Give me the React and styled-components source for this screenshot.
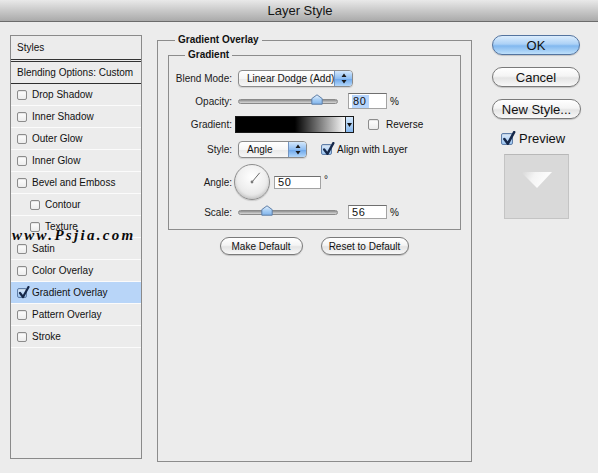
import React from "react";
import styled, { createGlobalStyle, css } from "styled-components";

const FONT = `"Liberation Sans", Arial, sans-serif`;

const GlobalStyle = createGlobalStyle`
  html, body { margin: 0; padding: 0; background: #ececec; }
  body { font-family: ${FONT}; color: #111; }
  * { box-sizing: border-box; }
`;

const Window = styled.div`
  position: relative;
  width: 598px;
  height: 473px;
  overflow: hidden;
  background: #ececec;
  display: flex;
  flex-direction: column;
`;

const TitleBar = styled.div`
  height: 22px;
  flex: none;
  border-bottom: 1px solid #6c6c6c;
  background: linear-gradient(#e9e9e9, #c9c9c9 50%, #aaaaaa);
  display: flex;
  align-items: center;
  justify-content: center;
  font-size: 13px;
  color: #141414;
  padding-left: 2px;
`;

const Main = styled.div`
  display: flex;
  align-items: flex-start;
  padding: 13px 0 0 10px;
`;

/* ---------- Left styles list ---------- */
const StylesPanel = styled.div`
  width: 132px;
  height: 424px;
  flex: none;
  border: 1px solid #8a8a8a;
  display: flex;
  flex-direction: column;
`;

const PanelHeader = styled.div`
  height: 26px;
  padding: 0 0 0 6px;
  display: flex;
  align-items: center;
  font-size: 10px;
  border-bottom: 3px double #333;
`;

const BlendRow = styled.div`
  height: 22px;
  padding-left: 6px;
  display: flex;
  align-items: center;
  font-size: 10px;
  border-bottom: 1px solid #2e2e2e;
`;

const ListRow = styled.div`
  height: 22px;
  display: flex;
  align-items: center;
  gap: 5px;
  padding-left: ${(p) => (p.$indent ? 19 : 6)}px;
  font-size: 10px;
  border-bottom: 1px solid #fbfbfb;
  background: ${(p) => (p.$selected ? "#b8d5f8" : "transparent")};
`;

const Watermark = styled.div`
  position: absolute;
  left: 12px;
  top: 227px;
  font-family: "Liberation Serif", "Times New Roman", serif;
  font-style: italic;
  font-weight: bold;
  font-size: 15px;
  letter-spacing: 2.3px;
  color: #0a0a0a;
  pointer-events: none;
`;

/* ---------- Checkbox ---------- */
const Box = styled.span`
  position: relative;
  flex: none;
  display: inline-block;
  width: ${(p) => p.$size}px;
  height: ${(p) => p.$size}px;
  border: 1px solid #8c8c8c;
  border-radius: 2px;
  background: linear-gradient(#ffffff, #ececec);
  box-shadow: inset 0 1px 1px rgba(0, 0, 0, 0.1);
  ${(p) =>
    p.$checked &&
    css`
      border-color: #5f7ea8;
      background: linear-gradient(#dcebfc, #9cc5f1);
    `}
`;

const CheckGlyph = styled.svg`
  position: absolute;
  left: 0px;
  top: -3px;
`;

function Checkbox({ size = 10, checked }) {
  return (
    <Box $size={size} $checked={checked}>
      {checked && (
        <CheckGlyph width={size + 2} height={size + 3} viewBox="0 0 12 13">
          <path d="M2 7 L5 11 L10.5 1" fill="none" stroke="#16284a" strokeWidth="2.2" strokeLinecap="round" strokeLinejoin="round" />
        </CheckGlyph>
      )}
    </Box>
  );
}

/* ---------- Center ---------- */
const GroupBox = styled.fieldset`
  margin: 0;
  padding: 0;
  min-width: 0;
  border: 1px solid #8c8c8c;
`;

const OuterGroup = styled(GroupBox)`
  flex: none;
  width: 315px;
  height: 428px;
  margin-left: 15px;
  margin-top: -1px;
`;

const InnerGroup = styled(GroupBox)`
  margin: 3px 10px 0 10px;
  padding: 6px 0 7px 0;
`;

const Legend = styled.legend`
  font-size: 10px;
  font-weight: bold;
  line-height: 12px;
  padding: 0 3px;
  margin-left: ${(p) => p.$offset}px;
`;

const Row = styled.div`
  height: ${(p) => p.$h}px;
  display: flex;
  align-items: center;
  font-size: 10px;
`;

const Label = styled.span`
  flex: none;
  width: 63px;
  margin-right: 6px;
  text-align: right;
  font-size: 10px;
  color: #1a1a1a;
`;

const Popup = styled.div`
  flex: none;
  width: ${(p) => p.$w}px;
  height: 17px;
  border: 1px solid #8b8b8b;
  border-radius: 4px;
  overflow: hidden;
  display: flex;
  align-items: center;
  padding-left: 8px;
  font-size: 10px;
  white-space: nowrap;
  background: linear-gradient(#ffffff, #f6f6f6 50%, #e9e9e9 51%, #f7f7f7);
  box-shadow: 0 1px 1px rgba(0, 0, 0, 0.12);
`;

const Stepper = styled.span`
  margin-left: auto;
  flex: none;
  width: 18px;
  align-self: stretch;
  border-left: 1px solid #7394c0;
  background: linear-gradient(#d4e8fc, #8fbef2 50%, #6aa5ea 51%, #b3d7fa);
  display: flex;
  align-items: center;
  justify-content: center;
`;

function StepperArrows() {
  return (
    <Stepper>
      <svg width="6" height="11" viewBox="0 0 6 11">
        <path d="M3 0.5 L5.5 4 L0.5 4 Z M3 10.5 L5.5 7 L0.5 7 Z" fill="#1b1b1b" />
      </svg>
    </Stepper>
  );
}

const Track = styled.div`
  position: relative;
  flex: none;
  width: 100px;
  height: 5px;
  border-radius: 3px;
  border: 1px solid #8a8a8a;
  background: linear-gradient(#8e8e8e, #bdbdbd 60%, #d6d6d6);
`;

const Thumb = styled.svg`
  position: absolute;
  top: -6px;
  margin-left: -6px;
`;

function Slider({ fraction }) {
  return (
    <Track>
      <Thumb width="12" height="11" viewBox="0 0 12 11" style={{ left: `${fraction * 100}%` }}>
        <defs>
          <linearGradient id="thumbg" x1="0" y1="0" x2="0" y2="1">
            <stop offset="0" stopColor="#eaf3fd" />
            <stop offset="0.5" stopColor="#a9cff5" />
            <stop offset="1" stopColor="#7fb3ec" />
          </linearGradient>
        </defs>
        <path d="M6 0.8 L11.2 4.6 L11.2 10.2 L0.8 10.2 L0.8 4.6 Z" fill="url(#thumbg)" stroke="#5d7da6" strokeWidth="1" />
      </Thumb>
    </Track>
  );
}

const NumField = styled.div`
  flex: none;
  width: ${(p) => p.$w}px;
  height: ${(p) => p.$h}px;
  margin-left: ${(p) => p.$ml}px;
  background: #fff;
  border: 1px solid #a3a3a3;
  border-top-color: #6f6f6f;
  display: flex;
  align-items: center;
  padding-left: 3px;
  font-size: 11px;
  letter-spacing: 0.6px;
`;

const Selected = styled.span`
  background: #b6d5fd;
  padding: 0 3px 0 1px;
  line-height: 13px;
`;

const Unit = styled.span`
  margin-left: 3px;
  font-size: 10px;
  align-self: ${(p) => (p.$raised ? "flex-start" : "center")};
  margin-top: ${(p) => (p.$raised ? 12 : 0)}px;
`;

const GradientSwatch = styled.div`
  display: flex;
  flex: none;
  height: 17px;
  margin-left: -3px;
  border: 1px solid #1a1a1a;
`;

const GradientFill = styled.div`
  width: 109px;
  background: linear-gradient(to right, #000 0%, #000 54%, #fafafa 100%);
`;

const GradientArrow = styled.div`
  width: 8px;
  border-left: 1px solid #2a2a2a;
  background: linear-gradient(#d8eafc, #86b8ee);
  display: flex;
  align-items: center;
  justify-content: center;
`;

const CheckLabel = styled.label`
  display: flex;
  align-items: center;
  gap: ${(p) => p.$gap}px;
  margin-left: ${(p) => p.$ml}px;
  font-size: 10px;
  white-space: nowrap;
`;

const Dial = styled.div`
  position: relative;
  flex: none;
  width: 36px;
  height: 36px;
  margin-left: -4px;
  border-radius: 50%;
  border: 1px solid #8e8e8e;
  background: radial-gradient(circle at 50% 35%, #ffffff 0%, #f0f0f0 45%, #d9d9d9 100%);
  box-shadow: inset 0 -2px 3px rgba(0, 0, 0, 0.12), 0 1px 1px rgba(0, 0, 0, 0.15);
`;

const DialHand = styled.svg`
  position: absolute;
  left: 0;
  top: 0;
`;

const ButtonBar = styled.div`
  display: flex;
  justify-content: center;
  gap: 18px;
  margin-top: 7px;
  padding-right: 1px;
`;

const PillButton = styled.button`
  flex: none;
  width: ${(p) => p.$w}px;
  height: ${(p) => p.$h}px;
  padding: 0;
  border-radius: 999px;
  border: 1px solid #7a7a7a;
  font-family: ${FONT};
  font-size: ${(p) => p.$fs}px;
  color: #111;
  white-space: nowrap;
  background: linear-gradient(#ffffff 0%, #f4f4f4 45%, #e4e4e4 55%, #f8f8f8 100%);
  box-shadow: 0 1px 1px rgba(0, 0, 0, 0.18);
  ${(p) =>
    p.$primary &&
    css`
      border-color: #54749f;
      background: linear-gradient(#dcedfd 0%, #acd1f6 45%, #82b8ef 55%, #bfe0fb 100%);
    `}
`;

/* ---------- Right column ---------- */
const RightColumn = styled.div`
  flex: none;
  width: 89px;
  margin-left: 20px;
  display: flex;
  flex-direction: column;
  gap: 12px;
`;

const PreviewCheck = styled.label`
  display: flex;
  align-items: center;
  gap: 6px;
  margin-left: 9px;
  font-size: 13px;
`;

const PreviewSwatch = styled.div`
  width: 65px;
  height: 65px;
  margin-left: 12px;
  margin-top: -4px;
  background: #d9d9d9;
  border: 1px solid #c4c4c4;
  border-top-color: #b8b8b8;
  display: flex;
  justify-content: center;
  padding-top: 17px;
`;

const styleItems = [
  { name: "Drop Shadow" },
  { name: "Inner Shadow" },
  { name: "Outer Glow" },
  { name: "Inner Glow" },
  { name: "Bevel and Emboss" },
  { name: "Contour", indent: true },
  { name: "Texture", indent: true },
  { name: "Satin" },
  { name: "Color Overlay" },
  { name: "Gradient Overlay", checked: true, selected: true },
  { name: "Pattern Overlay" },
  { name: "Stroke" },
];

export default function App() {
  const angle = 50;
  const rad = (angle * Math.PI) / 180;
  const hx = 17 + 12 * Math.cos(rad);
  const hy = 17 - 12 * Math.sin(rad);
  return (
    <>
      <GlobalStyle />
      <Window>
        <TitleBar>Layer Style</TitleBar>
        <Main>
          <StylesPanel>
            <PanelHeader>Styles</PanelHeader>
            <BlendRow>Blending Options: Custom</BlendRow>
            {styleItems.map((it) => (
              <ListRow key={it.name} $indent={it.indent} $selected={it.selected}>
                <Checkbox size={10} checked={it.checked} />
                <span>{it.name}</span>
              </ListRow>
            ))}
          </StylesPanel>

          <OuterGroup>
            <Legend $offset={17}>Gradient Overlay</Legend>
            <InnerGroup>
              <Legend $offset={16}>Gradient</Legend>
              <Row $h={23}>
                <Label>Blend Mode:</Label>
                <Popup $w={115}>
                  Linear Dodge (Add)
                  <StepperArrows />
                </Popup>
              </Row>
              <Row $h={22}>
                <Label>Opacity:</Label>
                <Slider fraction={0.8} />
                <NumField $w={39} $h={16} $ml={10}>
                  <Selected>80</Selected>
                </NumField>
                <Unit>%</Unit>
              </Row>
              <Row $h={25}>
                <Label>Gradient:</Label>
                <GradientSwatch>
                  <GradientFill />
                  <GradientArrow>
                    <svg width="5" height="4" viewBox="0 0 5 4">
                      <path d="M0 0 L5 0 L2.5 4 Z" fill="#111" />
                    </svg>
                  </GradientArrow>
                </GradientSwatch>
                <CheckLabel $gap={7} $ml={14}>
                  <Checkbox size={11} />
                  Reverse
                </CheckLabel>
              </Row>
              <Row $h={25}>
                <Label>Style:</Label>
                <Popup $w={69}>
                  Angle
                  <StepperArrows />
                </Popup>
                <CheckLabel $gap={5} $ml={14}>
                  <Checkbox size={11} checked />
                  Align with Layer
                </CheckLabel>
              </Row>
              <Row $h={40}>
                <Label>Angle:</Label>
                <Dial>
                  <DialHand width="34" height="34" viewBox="0 0 34 34">
                    <line x1="17" y1="17" x2={hx} y2={hy} stroke="#6a6a6a" strokeWidth="1" />
                    <circle cx="17" cy="17" r="1.4" fill="#7a7a7a" />
                  </DialHand>
                </Dial>
                <NumField $w={47} $h={13} $ml={4}>50</NumField>
                <Unit $raised>°</Unit>
              </Row>
              <Row $h={20}>
                <Label>Scale:</Label>
                <Slider fraction={0.29} />
                <NumField $w={39} $h={14} $ml={10}>56</NumField>
                <Unit>%</Unit>
              </Row>
            </InnerGroup>
            <ButtonBar>
              <PillButton $w={83} $h={18} $fs={10}>Make Default</PillButton>
              <PillButton $w={88} $h={18} $fs={10}>Reset to Default</PillButton>
            </ButtonBar>
          </OuterGroup>

          <RightColumn>
            <PillButton $w={88} $h={20} $fs={13} $primary>OK</PillButton>
            <PillButton $w={88} $h={20} $fs={13}>Cancel</PillButton>
            <PillButton $w={89} $h={20} $fs={13}>New Style...</PillButton>
            <PreviewCheck>
              <Checkbox size={12} checked />
              Preview
            </PreviewCheck>
            <PreviewSwatch>
              <svg width="31" height="16" viewBox="0 0 31 16">
                <defs>
                  <linearGradient id="tri" x1="0" y1="0" x2="1" y2="0.3">
                    <stop offset="0" stopColor="#d6d6d6" />
                    <stop offset="0.45" stopColor="#f4f4f4" />
                    <stop offset="1" stopColor="#ffffff" />
                  </linearGradient>
                </defs>
                <polygon points="0,0 31,0 16,16" fill="url(#tri)" />
              </svg>
            </PreviewSwatch>
          </RightColumn>
        </Main>
        <Watermark>www.Psjia.com</Watermark>
      </Window>
    </>
  );
}
